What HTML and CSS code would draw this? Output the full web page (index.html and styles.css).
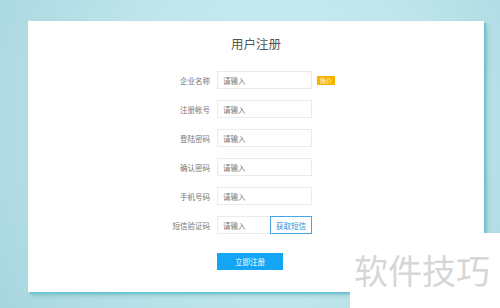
FILE: index.html
```html
<!DOCTYPE html>
<html lang="zh-CN">
<head>
  <meta charset="UTF-8">
  <meta name="viewport" content="width=device-width, initial-scale=1.0">
  <title>用户注册</title>
  <link rel="stylesheet" href="styles.css">
</head>
<body>
  <div class="card">
    <h1 class="title">用户注册</h1>
    <form class="form">
      <div class="row">
        <label class="label">企业名称</label>
        <input class="input" type="text" placeholder="请输入">
        <span class="badge">简介</span>
      </div>
      <div class="row">
        <label class="label">注册帐号</label>
        <input class="input" type="text" placeholder="请输入">
      </div>
      <div class="row">
        <label class="label">登陆密码</label>
        <input class="input" type="password" placeholder="请输入">
      </div>
      <div class="row">
        <label class="label">确认密码</label>
        <input class="input" type="password" placeholder="请输入">
      </div>
      <div class="row">
        <label class="label">手机号码</label>
        <input class="input" type="text" placeholder="请输入">
      </div>
      <div class="row">
        <label class="label">短信验证码</label>
        <div class="sms">
          <input class="input sms-input" type="text" placeholder="请输入">
          <button class="sms-btn" type="button">获取短信</button>
        </div>
      </div>
      <div class="row submit-row">
        <button class="submit" type="button">立即注册</button>
      </div>
    </form>
  </div>
  <div class="watermark">软件技巧</div>
</body>
</html>
```

FILE: styles.css
```css
body {
  margin: 0;
  width: 500px;
  height: 308px;
  overflow: hidden;
  font-family: "Noto Sans CJK SC", "Noto Sans", sans-serif;
  background: radial-gradient(ellipse 70% 120% at 55% 40%, #cdeff3 0%, #bfe6ec 45%, #a4d3dd 100%);
  padding: 21px 0 0 28px;
  box-sizing: border-box;
}
.card {
  width: 456px;
  height: 271px;
  background-color: #fff;
  box-shadow: 2px 2px 0 #6fc6d2, 3px 3px 4px rgba(40, 130, 150, 0.35);
  padding-top: 14px;
  box-sizing: border-box;
}
.title {
  margin: 0;
  text-align: center;
  font-size: 12.5px;
  line-height: 18px;
  font-weight: normal;
  color: #555;
}
.form {
  margin-top: 18px;
  padding-left: 132px;
  display: flex;
  flex-direction: column;
  gap: 11px;
}
.row {
  display: flex;
  align-items: center;
  height: 18px;
}
.label {
  width: 50px;
  margin-right: 7px;
  text-align: right;
  font-size: 7.5px;
  color: #777;
  white-space: nowrap;
}
.input {
  width: 95px;
  height: 18px;
  box-sizing: border-box;
  border: 1px solid #ebebeb;
  padding: 0 5px;
  font-family: inherit;
  font-size: 7.5px;
  color: #333;
  outline: none;
}
.input::placeholder {
  color: #777;
}
.badge {
  margin-left: 5px;
  width: 18px;
  height: 9px;
  line-height: 9px;
  background-color: #f7b500;
  color: #fff;
  font-size: 6px;
  text-align: center;
}
.sms {
  display: flex;
  width: 95px;
}
.sms-input {
  width: 53px;
  border-right: none;
}
.sms-btn {
  width: 42px;
  height: 18px;
  box-sizing: border-box;
  border: 1px solid #45a6e2;
  background-color: #fff;
  color: #2f8fd4;
  font-family: inherit;
  font-size: 7.5px;
  padding: 0;
}
.submit-row {
  margin-top: 7px;
  padding-left: 57px;
}
.submit {
  width: 66px;
  height: 17px;
  border: none;
  background-color: #14a5f5;
  color: #fff;
  font-family: inherit;
  font-size: 7.5px;
  padding: 0;
}
.watermark {
  position: absolute;
  left: 350px;
  top: 233px;
  width: 150px;
  height: 75px;
  background-color: #fff;
  color: #d6d6d6;
  font-size: 34px;
  line-height: 34px;
  padding: 20px 0 0 4px;
  box-sizing: border-box;
  white-space: nowrap;
}
```
